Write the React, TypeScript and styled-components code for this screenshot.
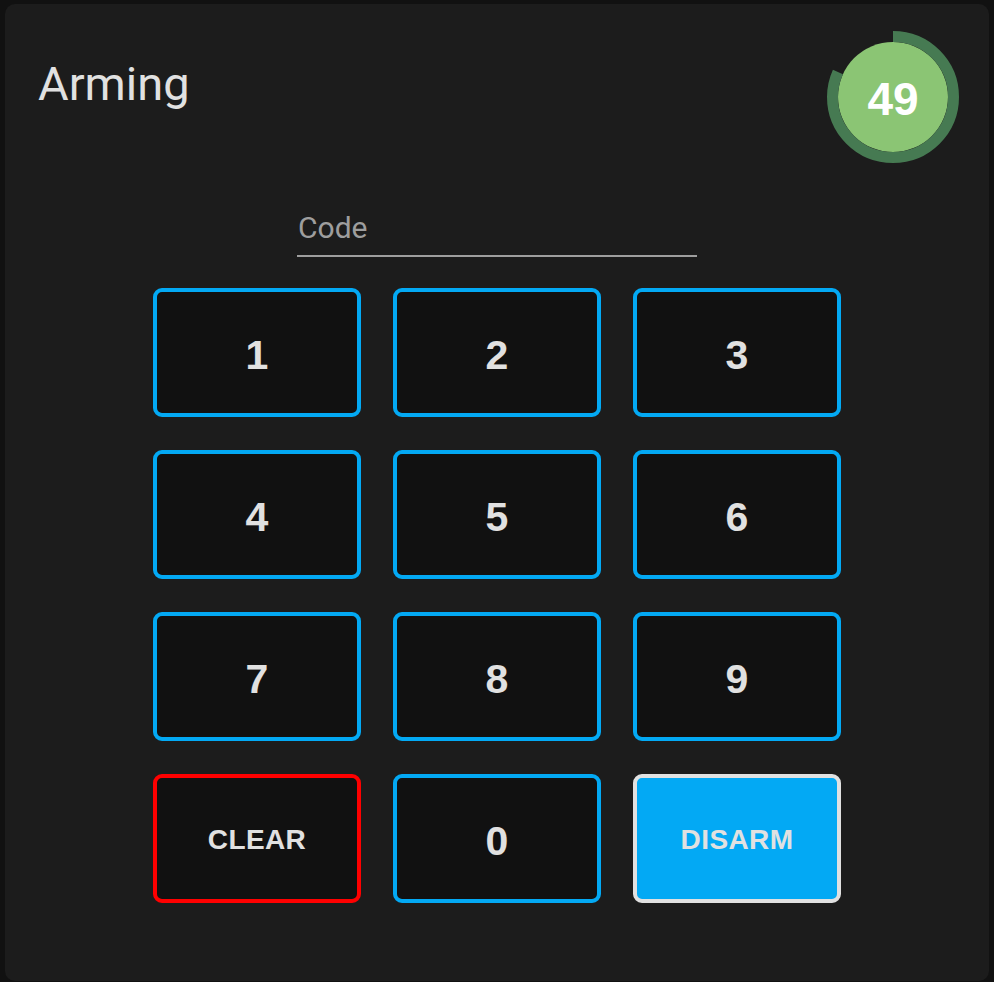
import React from "react";
import styled, { createGlobalStyle } from "styled-components";

const Global = createGlobalStyle`
  html, body { margin: 0; padding: 0; background: #111111; }
  body { font-family: Roboto, "Liberation Sans", sans-serif; }
`;

const Page = styled.div`
  padding: 4px 5px 1px 5px;
  box-sizing: border-box;
  min-height: 982px;
  display: flex;
`;

const Card = styled.div`
  flex: 1;
  background: #1c1c1c;
  border-radius: 10px;
  display: flex;
  flex-direction: column;
  align-items: center;
`;

const Header = styled.div`
  align-self: stretch;
  display: flex;
  justify-content: space-between;
  align-items: flex-start;
  padding: 27px 30px 0 33px;
`;

const Title = styled.h1`
  margin: 29px 0 0 0;
  font-size: 47px;
  line-height: 1;
  font-weight: 400;
  color: #e1e1e1;
`;

const Badge = styled.div`
  position: relative;
  width: 132px;
  height: 132px;
`;

const BadgeText = styled.div`
  position: absolute;
  inset: 0;
  display: flex;
  align-items: center;
  justify-content: center;
  color: #ffffff;
  font-family: "Liberation Sans", Arial, sans-serif;
  font-size: 46px;
  font-weight: 700;
  padding-top: 3px;
`;

const Field = styled.div`
  margin-top: 48px;
  width: 400px;
  border-bottom: 2px solid #9e9e9e;
`;

const Label = styled.div`
  font-size: 30px;
  line-height: 1;
  color: #9e9e9e;
  padding-top: 2px;
  padding-bottom: 12px;
  padding-left: 1px;
`;

const Keypad = styled.div`
  margin-top: 31px;
  display: grid;
  grid-template-columns: repeat(3, 208px);
  grid-auto-rows: 129px;
  column-gap: 32px;
  row-gap: 33px;
`;

type Variant = "digit" | "clear" | "action";

const Key = styled.button<{ $variant: Variant }>`
  box-sizing: border-box;
  border-radius: 9px;
  border: 4px solid
    ${(p) => (p.$variant === "clear" ? "#ff0000" : p.$variant === "action" ? "#e1e1e1" : "#03a9f4")};
  background: ${(p) => (p.$variant === "action" ? "#03a9f4" : "#111111")};
  color: #e1e1e1;
  font-family: "Liberation Sans", Arial, sans-serif;
  font-weight: 700;
  font-size: ${(p) => (p.$variant === "digit" ? "41px" : "28px")};
  letter-spacing: ${(p) => (p.$variant === "digit" ? "0" : "0.4px")};
  display: flex;
  align-items: center;
  justify-content: center;
  padding: ${(p) => (p.$variant === "digit" ? "5px 0 0 0" : "2px 0 0 0")};
  cursor: pointer;
`;

const R = 60.5;
const C = 2 * Math.PI * R;

export default function App() {
  const keys: { label: string; v: Variant }[] = [
    { label: "1", v: "digit" },
    { label: "2", v: "digit" },
    { label: "3", v: "digit" },
    { label: "4", v: "digit" },
    { label: "5", v: "digit" },
    { label: "6", v: "digit" },
    { label: "7", v: "digit" },
    { label: "8", v: "digit" },
    { label: "9", v: "digit" },
    { label: "CLEAR", v: "clear" },
    { label: "0", v: "digit" },
    { label: "DISARM", v: "action" },
  ];
  const frac = 49 / 60;
  return (
    <>
      <Global />
      <Page>
        <Card>
          <Header>
            <Title>Arming</Title>
            <Badge>
              <svg width="132" height="132" viewBox="0 0 132 132">
                <circle cx="66" cy="66" r="55" fill="#8bc574" />
                <circle
                  cx="66"
                  cy="66"
                  r={R}
                  fill="none"
                  stroke="#467a52"
                  strokeWidth="11"
                  strokeDasharray={`${C * frac} ${C}`}
                  transform="rotate(-90 66 66)"
                />
              </svg>
              <BadgeText>49</BadgeText>
            </Badge>
          </Header>
          <Field>
            <Label>Code</Label>
          </Field>
          <Keypad>
            {keys.map((k) => (
              <Key key={k.label} $variant={k.v}>
                {k.label}
              </Key>
            ))}
          </Keypad>
        </Card>
      </Page>
    </>
  );
}
